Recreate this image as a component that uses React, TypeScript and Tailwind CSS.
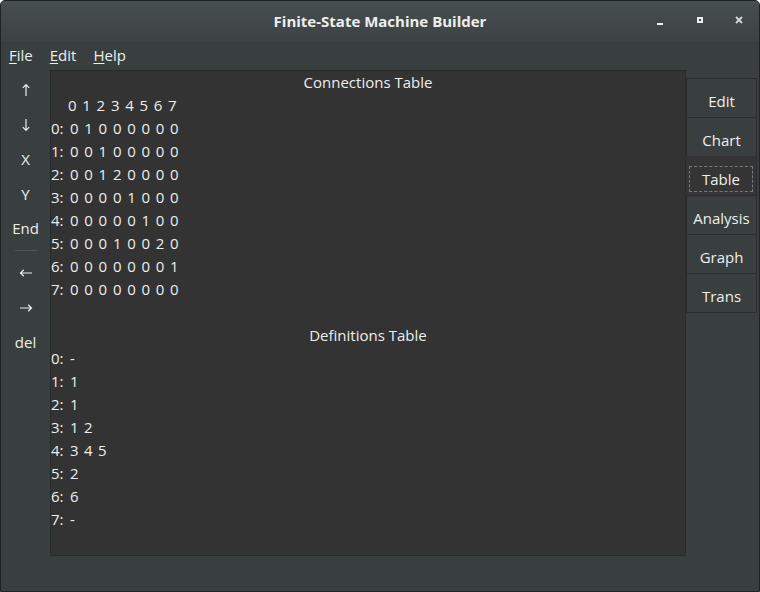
import type { ReactNode } from 'react';

const connections = [
  [0, 1, 0, 0, 0, 0, 0, 0],
  [0, 0, 1, 0, 0, 0, 0, 0],
  [0, 0, 1, 2, 0, 0, 0, 0],
  [0, 0, 0, 0, 1, 0, 0, 0],
  [0, 0, 0, 0, 0, 1, 0, 0],
  [0, 0, 0, 1, 0, 0, 2, 0],
  [0, 0, 0, 0, 0, 0, 0, 1],
  [0, 0, 0, 0, 0, 0, 0, 0],
];

const definitions = [['-'], ['1'], ['1'], ['1', '2'], ['3', '4', '5'], ['2'], ['6'], ['-']];

const tabs = ['Edit', 'Chart', 'Table', 'Analysis', 'Graph', 'Trans'];

function Mnemonic({ first, rest }: { first: string; rest: string }) {
  return (
    <span>
      <span className="underline underline-offset-2">{first}</span>
      {rest}
    </span>
  );
}

function ToolButton({ children }: { children: ReactNode }) {
  return <div className="h-[34.5px] flex items-center justify-center">{children}</div>;
}

// thin arrow pointing up; rotated for the other directions
function Arrow({ rotate }: { rotate: number }) {
  return (
    <svg width="14" height="14" viewBox="0 0 14 14" style={{ transform: `rotate(${rotate}deg)` }}>
      <path d="M7 1.5 V13 M3.8 4.8 L7 1.5 L10.2 4.8" stroke="#eeeeec" strokeWidth="1.2" fill="none" />
    </svg>
  );
}

export default function App() {
  return (
    <div
      className="w-[760px] h-[592px] bg-[#393f3f] text-[#eeeeec] flex flex-col overflow-hidden border border-[#1f2323] rounded-t-[5px] text-[15px]"
      style={{ fontFamily: '"Open Sans", "Noto Sans", sans-serif' }}
    >
      {/* title bar */}
      <div className="h-[40px] flex-none grid grid-cols-[1fr_auto_1fr] items-center bg-gradient-to-b from-[#474e50] to-[#3d4345]">
        <div />
        <div className="font-bold text-[15px] text-[#eeeeec]">Finite-State Machine Builder</div>
        <div className="flex justify-end items-center gap-[23px] pr-[12px]">
          <svg width="16" height="16" viewBox="0 0 16 16">
            <rect x="4" y="10" width="6" height="2" fill="#eeeeec" />
          </svg>
          <svg width="16" height="16" viewBox="0 0 16 16">
            <rect x="5" y="4" width="6" height="6" fill="#eeeeec" />
            <rect x="7" y="6" width="2" height="2" fill="#3f4547" />
          </svg>
          <svg width="16" height="16" viewBox="0 0 16 16">
            <path d="M5 4 L11 10 M11 4 L5 10" stroke="#d8d8d6" strokeWidth="1.8" />
          </svg>
        </div>
      </div>

      {/* menu bar */}
      <div className="h-[29px] flex-none flex items-center gap-[17px] pl-[8px]">
        <Mnemonic first="F" rest="ile" />
        <Mnemonic first="E" rest="dit" />
        <Mnemonic first="H" rest="elp" />
      </div>

      <div className="flex flex-none">
        {/* left toolbar */}
        <div className="w-[49px] flex-none flex flex-col pt-[3px]">
          <ToolButton><Arrow rotate={0} /></ToolButton>
          <ToolButton><Arrow rotate={180} /></ToolButton>
          <ToolButton>X</ToolButton>
          <ToolButton>Y</ToolButton>
          <ToolButton>End</ToolButton>
          <div className="h-[10.5px] flex items-center justify-center">
            <div className="w-[22px] h-px bg-[#4e5555]" />
          </div>
          <ToolButton><Arrow rotate={270} /></ToolButton>
          <ToolButton><Arrow rotate={90} /></ToolButton>
          <ToolButton>del</ToolButton>
        </div>

        {/* content panel */}
        <div className="w-[636px] h-[486px] flex-none bg-[#333333] border border-[#2a2c2c] leading-[23px]">
          <div className="text-center">Connections Table</div>
          <div className="flex">
            <span className="w-[17px]" />
            {[0, 1, 2, 3, 4, 5, 6, 7].map((n) => (
              <span key={n} className="w-[14.3px]">{n}</span>
            ))}
          </div>
          {connections.map((row, i) => (
            <div key={i} className="flex">
              <span className="w-[19px]">{i}:</span>
              {row.map((v, j) => (
                <span key={j} className="w-[14.3px]">{v}</span>
              ))}
            </div>
          ))}
          <div className="h-[23px]" />
          <div className="text-center">Definitions Table</div>
          {definitions.map((items, i) => (
            <div key={i} className="flex">
              <span className="w-[19px]">{i}:</span>
              {items.map((v, j) => (
                <span key={j} className="w-[14px]">{v}</span>
              ))}
            </div>
          ))}
        </div>

        {/* right tabs */}
        <div className="flex-none flex flex-col pt-[8px] w-[71px]">
          {tabs.map((t) => {
            const active = t === 'Table';
            return active ? (
              <div key={t} className="h-[40px] -mt-px flex items-center justify-center bg-[#353535] border-r border-[#2a2c2c] px-[3px]">
                <div className="w-full h-[26px] mt-[6px] flex items-center justify-center border border-dashed border-[#777a7a]">
                  {t}
                </div>
              </div>
            ) : (
              <div
                key={t}
                className="h-[40px] flex items-center justify-center border border-[#2a2e2e] -mt-px first:mt-0 pt-[6px]"
              >
                {t}
              </div>
            );
          })}
        </div>
      </div>
    </div>
  );
}
